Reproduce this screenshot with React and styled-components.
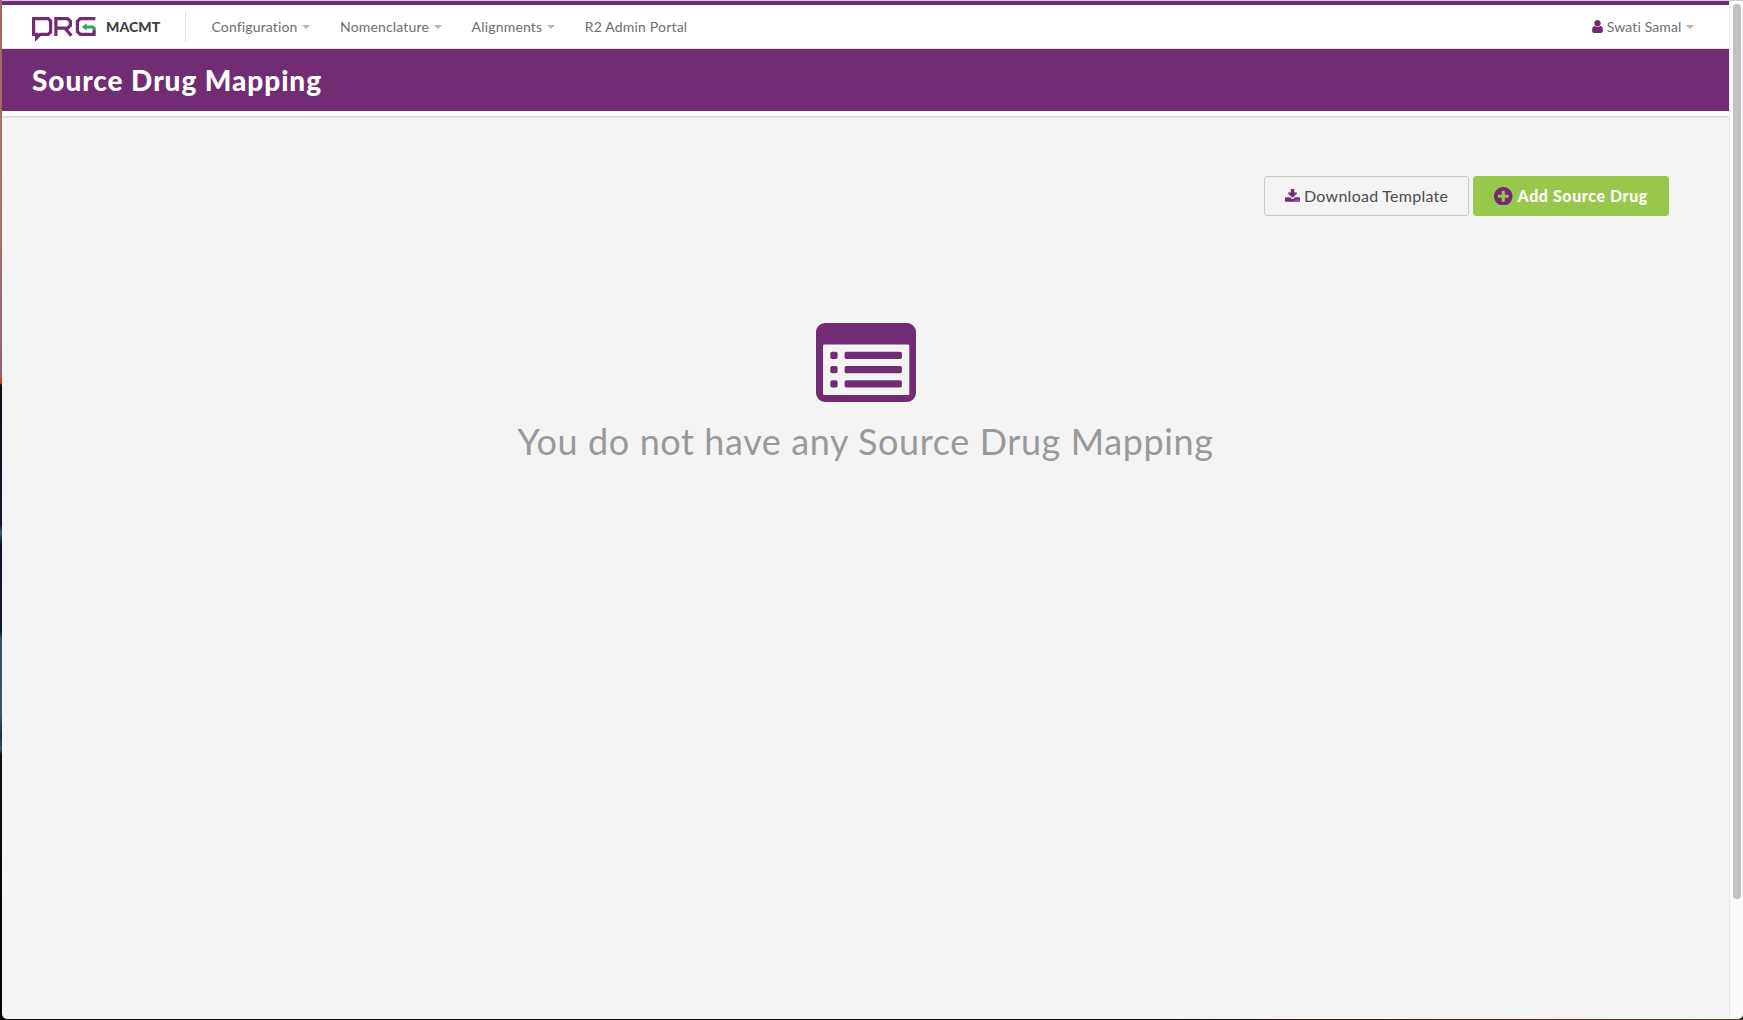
import React from 'react';
import styled, { createGlobalStyle } from 'styled-components';

const PURPLE = '#722c74';

const GlobalStyle = createGlobalStyle`
  * { box-sizing: border-box; }
  html, body { margin: 0; height: 100%; overflow: hidden; }
  body {
    font-family: Lato, "Liberation Sans", sans-serif;
    font-size: 14px;
    color: #6d6e71;
  }
`;

const Desktop = styled.div`
  width: 1743px;
  height: 1020px;
  padding: 0 0 1px 2px;
  background:
    linear-gradient(90deg, #0b0b0d 0 1150px, #30211b 1300px, #6b3a25 1743px) 0 1019px / 100% 1px no-repeat,
    linear-gradient(180deg,
      #a0685f 0, #a8716b 200px, #94606d 375px, #c8452c 379px, #c8452c 383px,
      #0b0d1b 385px, #11192a 525px, #3b5878 532px, #0d1426 545px,
      #101a2e 632px, #35506c 638px, #38546f 715px, #1b3048 735px, #35506c 750px,
      #160c10 754px, #050505 900px);
`;

const Window = styled.div`
  display: flex;
  height: 1019px;
  overflow: hidden;
  border-top: 1px solid #d0ced0;
  border-radius: 0 0 5px 5px;
  background: #f4f4f4;
`;

const Page = styled.div`
  flex: 1;
  display: flex;
  flex-direction: column;
  min-width: 0;
`;

const ScrollTrack = styled.div`
  flex: none;
  width: 14px;
  padding: 3px 0 0 3px;
  border-left: 1px solid #e6e6e6;
  background: #fafafa;
`;

const ScrollThumb = styled.div`
  width: 8px;
  height: 895px;
  border-radius: 4px;
  background: #c1c1c1;
`;

const Header = styled.header`
  display: flex;
  align-items: center;
  height: 48px;
  padding: 0 35px 0 30px;
  border-top: 4px solid ${PURPLE};
  border-bottom: 1px solid #e2e0e2;
  background: #fff;
`;

const Brand = styled.div`
  display: flex;
  align-items: center;
  width: 154px;
  height: 30px;
  border-right: 1px solid #dedede;
  gap: 9px;
`;

const BrandName = styled.span`
  color: #404042;
  font-weight: 900;
  line-height: 20px;
  letter-spacing: 0.1px;
`;

const LogoSvg = styled.svg`
  display: block;
  width: 65px;
  height: 25px;
  margin-top: 5px;
`;

const Nav = styled.nav`
  flex: 1;
  display: flex;
  gap: 30px;
  margin-left: 25.5px;
`;

const MenuItem = styled.a`
  display: flex;
  align-items: center;
  line-height: 20px;
  letter-spacing: ${({ $tracking }) => $tracking}px;
  white-space: nowrap;
`;

const Caret = styled.i`
  width: 0;
  height: 0;
  margin: 0 0 0 4.5px;
  border: solid transparent;
  border-width: 4px 4px 0;
  border-top-color: #b5b5b7;
`;

const UserGlyph = styled.svg`
  width: 11px;
  height: 13px;
  margin-right: 4px;
  fill: ${PURPLE};
`;

const TitleBar = styled.div`
  height: 67px;
  padding: 14px 30px 0;
  border-bottom: 5px solid #fff;
  background: ${PURPLE};
  box-shadow: 0 1px 2px rgba(0, 0, 0, 0.16);
`;

const Title = styled.h1`
  margin: 0;
  color: #fff;
  font-size: 28px;
  font-weight: 900;
  line-height: 34px;
  letter-spacing: 0.93px;
`;

const Content = styled.main`
  flex: 1;
  display: flex;
  flex-direction: column;
  padding: 60px 60px 0;
`;

const Actions = styled.div`
  display: flex;
  justify-content: flex-end;
  gap: 4px;
`;

const Button = styled.button`
  display: flex;
  align-items: center;
  height: 40px;
  width: ${({ $primary }) => ($primary ? 196 : 205)}px;
  padding: 0 0 0 20px;
  border: 1px solid ${({ $primary }) => ($primary ? '#98c84b' : '#c9c9c9')};
  border-radius: 3px;
  background: ${({ $primary }) => ($primary ? '#98c84b' : 'transparent')};
  color: ${({ $primary }) => ($primary ? '#fff' : '#4c4c4e')};
  font: ${({ $primary }) => ($primary ? 900 : 400)} 16px/24px Lato, "Liberation Sans", sans-serif;
  letter-spacing: ${({ $primary }) => ($primary ? 0.58 : 0.27)}px;
  white-space: nowrap;
`;

const DownloadGlyph = styled.svg`
  flex: none;
  width: 15px;
  height: 14px;
  margin: -1px 4px 0 0;
  fill: ${PURPLE};
`;

const PlusGlyph = styled.svg`
  flex: none;
  width: 18.5px;
  height: 18.5px;
  margin-right: 5px;
  fill: ${PURPLE};
`;

const Empty = styled.section`
  display: flex;
  flex-direction: column;
  align-items: center;
  padding-top: 107px;
`;

const ListGlyph = styled.svg`
  width: 100px;
  height: 79px;
  fill: ${PURPLE};
`;

const EmptyText = styled.p`
  margin: 17px 0 0;
  color: #999;
  font-size: 36px;
  line-height: 44px;
  letter-spacing: 0.6px;
  white-space: nowrap;
`;

const Logo = () => (
  <LogoSvg viewBox="0 0 65 25" fill="none" strokeWidth="3.2" stroke={PURPLE}>
    <path d="M3.5 17.4H1.6V1.6H16.2L18.6 4V15L16.2 17.4H8.2L4.6 21V17.4Z" />
    <path d="M3 17.4H9.6L3.3 24Z" fill={PURPLE} stroke="none" />
    <path d="M23.9 19V1.6H35.5L38.4 4.2V8.5L35.5 11.2H24M33 11.2L39.4 18.8" />
    <path d="M63.4 1.6H48.3L45.4 4.4V14.6L48.3 17.4H62.1V12.5" />
    <path d="M53.5 10H60.4L62.1 11.2V13.2" stroke="#2bab5b" />
    <path d="M50 10L54.6 6.3V13.7Z" fill="#2bab5b" stroke="none" />
  </LogoSvg>
);

const menus = [
  { label: 'Configuration', tracking: 0.14, caret: true },
  { label: 'Nomenclature', tracking: 0.17, caret: true },
  { label: 'Alignments', tracking: 0.18, caret: true },
  { label: 'R2 Admin Portal', tracking: 0.18, caret: false },
];

export default function App() {
  return (
    <Desktop>
      <GlobalStyle />
      <Window>
        <Page>
          <Header>
            <Brand>
              <Logo />
              <BrandName>MACMT</BrandName>
            </Brand>
            <Nav>
              {menus.map(({ label, tracking, caret }) => (
                <MenuItem key={label} $tracking={tracking}>
                  {label}
                  {caret && <Caret />}
                </MenuItem>
              ))}
            </Nav>
            <MenuItem $tracking={0.12}>
              <UserGlyph viewBox="0 128 1280 1536">
                <path d="M1280 1399q0 109-62.5 187t-150.5 78h-854q-88 0-150.5-78t-62.5-187q0-85 8.5-160.5t31.5-152 58.5-131 94-89 134.5-34.5q131 128 313 128t313-128q76 0 134.5 34.5t94 89 58.5 131 31.5 152 8.5 160.5zm-256-887q0 159-112.5 271.5t-271.5 112.5-271.5-112.5-112.5-271.5 112.5-271.5 271.5-112.5 271.5 112.5 112.5 271.5z" />
              </UserGlyph>
              Swati Samal
              <Caret />
            </MenuItem>
          </Header>
          <TitleBar>
            <Title>Source Drug Mapping</Title>
          </TitleBar>
          <Content>
            <Actions>
              <Button>
                <DownloadGlyph viewBox="64 128 1664 1536">
                  <path d="M1344 1344q0-26-19-45t-45-19-45 19-19 45 19 45 45 19 45-19 19-45zm256 0q0-26-19-45t-45-19-45 19-19 45 19 45 45 19 45-19 19-45zm128-224v320q0 40-28 68t-68 28h-1472q-40 0-68-28t-28-68v-320q0-40 28-68t68-28h465l135 136q58 56 136 56t136-56l136-136h464q40 0 68 28t28 68zm-325-569q17 41-14 70l-448 448q-18 19-45 19t-45-19l-448-448q-31-29-14-70 17-39 59-39h256v-448q0-26 19-45t45-19h256q26 0 45 19t19 45v448h256q42 0 59 39z" />
                </DownloadGlyph>
                Download Template
              </Button>
              <Button $primary>
                <PlusGlyph viewBox="128 128 1536 1536">
                  <path d="M1344 960v-128q0-26-19-45t-45-19h-256v-256q0-26-19-45t-45-19h-128q-26 0-45 19t-19 45v256h-256q-26 0-45 19t-19 45v128q0 26 19 45t45 19h256v256q0 26 19 45t45 19h128q26 0 45-19t19-45v-256h256q26 0 45-19t19-45zm320-64q0 209-103 385.5t-279.5 279.5-385.5 103-385.5-103-279.5-279.5-103-385.5 103-385.5 279.5-279.5 385.5-103 385.5 103 279.5 279.5 103 385.5z" />
                </PlusGlyph>
                Add Source Drug
              </Button>
            </Actions>
            <Empty>
              <ListGlyph viewBox="0 0 100 79">
                <path
                  fillRule="evenodd"
                  d="M9 0H91A9 9 0 0 1 100 9V70A9 9 0 0 1 91 79H9A9 9 0 0 1 0 70V9A9 9 0 0 1 9 0ZM8.3 21.4A1.3 1.3 0 0 0 7 22.7V70.7A1.3 1.3 0 0 0 8.3 72H92A1.3 1.3 0 0 0 93.3 70.7V22.7A1.3 1.3 0 0 0 92 21.4Z"
                />
                {[28.7, 43, 57.3].map((y) => (
                  <React.Fragment key={y}>
                    <rect x="14.3" y={y} width="7.3" height="7.3" rx="1.8" />
                    <rect x="28.6" y={y} width="57.3" height="7.3" rx="1.8" />
                  </React.Fragment>
                ))}
              </ListGlyph>
              <EmptyText>You do not have any Source Drug Mapping</EmptyText>
            </Empty>
          </Content>
        </Page>
        <ScrollTrack>
          <ScrollThumb />
        </ScrollTrack>
      </Window>
    </Desktop>
  );
}
